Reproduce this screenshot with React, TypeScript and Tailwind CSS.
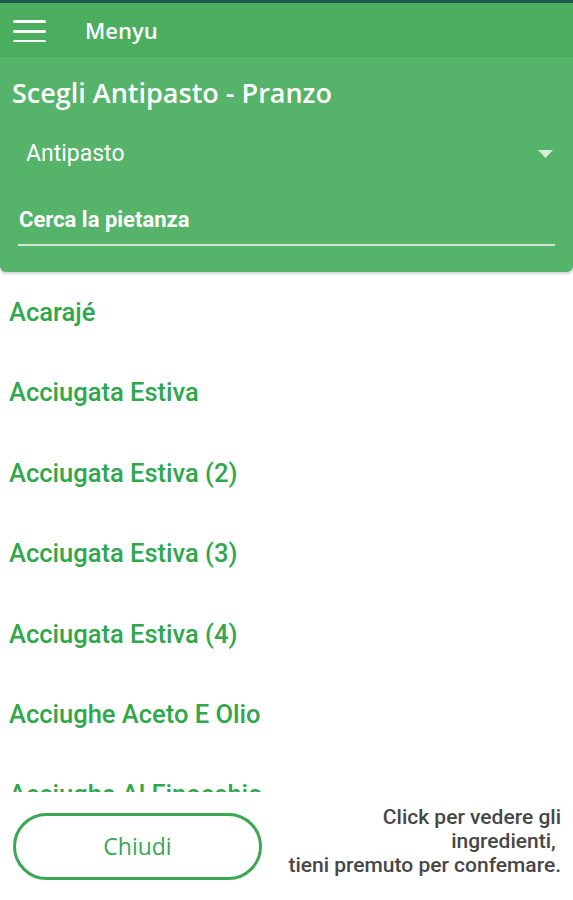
import React from "react";

const items = [
  "Acarajé",
  "Acciugata Estiva",
  "Acciugata Estiva (2)",
  "Acciugata Estiva (3)",
  "Acciugata Estiva (4)",
  "Acciughe Aceto E Olio",
  "Acciughe Al Finocchio",
];

export default function App() {
  return (
    <div className="flex h-[900px] w-[573px] flex-col overflow-hidden bg-white">
      <div className="h-[3px] bg-[#1e5a50]" />
      <div className="flex h-[54px] items-center bg-[#4bae5f] pl-[13px]">
        <svg width="33" height="24" viewBox="0 0 33 24">
          <rect x="0" y="2" width="33" height="3" rx="1.5" fill="#fff" />
          <rect x="0" y="12" width="33" height="3" rx="1.5" fill="#fff" />
          <rect x="0" y="22" width="33" height="3" rx="1.5" fill="#fff" />
        </svg>
        <span className="ml-[39px] font-['Open_Sans',sans-serif] text-[22px] font-semibold text-white">
          Menyu
        </span>
      </div>
      <div className="relative z-10 h-[215px] rounded-b-[6px] bg-[#55b36a] shadow-[0_2px_3px_rgba(0,0,0,0.18)]">
        <div className="pl-[12px] pt-[18px] font-['Open_Sans',sans-serif] text-[27px] font-semibold leading-[36px] text-white">
          Scegli Antipasto - Pranzo
        </div>
        <div className="mt-[28px] flex h-[30px] items-center justify-between pl-[26px] pr-[20px]">
          <span className="font-['Roboto',sans-serif] text-[23px] leading-[30px] text-white">
            Antipasto
          </span>
          <svg width="15" height="9" viewBox="0 0 15 9">
            <polygon points="0,0 15,0 7.5,8" fill="#d6eedb" />
          </svg>
        </div>
        <div className="mx-[18px] mt-[37px] border-b-2 border-[#cbe8d1] pb-[10px] pl-[1px] font-['Roboto',sans-serif] text-[22px] font-bold leading-[28px] text-white">
          Cerca la pietanza
        </div>
      </div>
      <div className="h-[520px] overflow-hidden">
        {items.map((t) => (
          <div
            key={t}
            className="flex h-[80.4px] items-center pl-[9px] font-['Roboto',sans-serif] text-[25.5px] font-medium text-[#2fa74c]"
          >
            {t}
          </div>
        ))}
      </div>
      <div className="flex flex-1 items-start justify-between pl-[13px] pr-[12px]">
        <button className="mt-[21px] flex h-[67px] w-[249px] items-center justify-center rounded-full border-[3px] border-[#3aa853] font-['Open_Sans',sans-serif] text-[23px] text-[#3aa853]">
          Chiudi
        </button>
        <div className="mt-[13px] text-right font-['Roboto',sans-serif] text-[21px] font-medium leading-[24px] text-[#474747]">
          Click per vedere gli
          <br />
          ingredienti,{"\u00a0"}
          <br />
          tieni premuto per confemare.
        </div>
      </div>
    </div>
  );
}
